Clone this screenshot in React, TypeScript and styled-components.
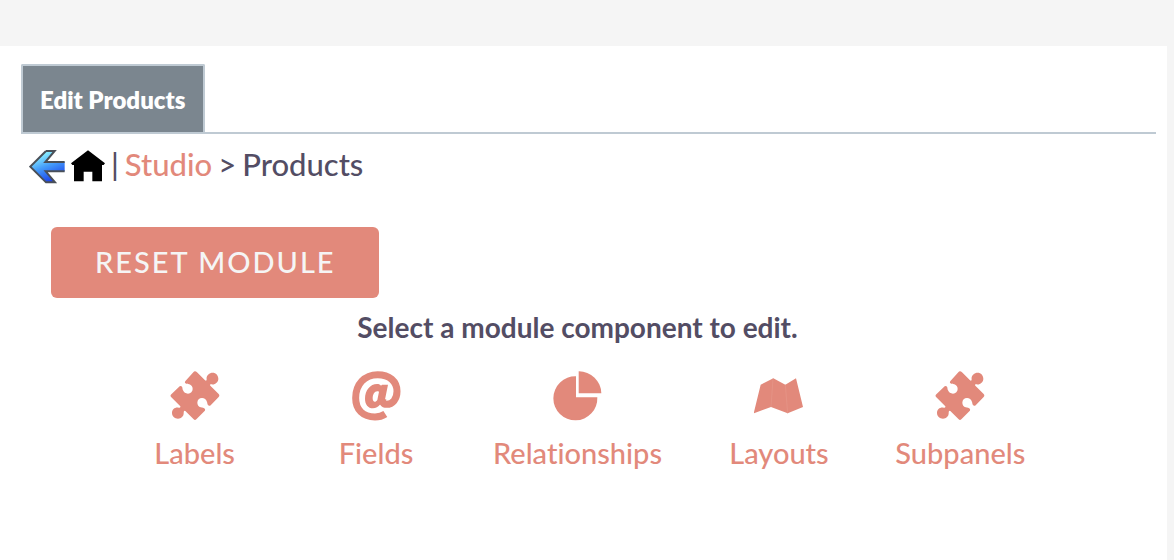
import React from 'react';
import styled, { createGlobalStyle } from 'styled-components';

const coral = '#e2897b';
const ink = '#534d64';
const line = '#bfcad3';

const GlobalStyle = createGlobalStyle`
  * { box-sizing: border-box; }
  html, body, #root { height: 100%; }
  body {
    margin: 0;
    background: #f5f5f5;
    color: ${ink};
    font-family: Lato, "Liberation Sans", sans-serif;
    font-weight: 500;
    font-variant-ligatures: none;
  }
`;

const Page = styled.div`
  display: flex;
  flex-direction: column;
  min-height: 100%;
  padding: 46px 7px 0 0;
`;

const Panel = styled.main`
  flex: 1;
  padding: 18px 11px 40px 21px;
  background: #fff;
`;

const TabBar = styled.nav`
  display: flex;
  border-bottom: 2px solid ${line};
`;

const Tab = styled.button`
  height: 68px;
  padding: 2px 18px 0 17px;
  border: 2px solid ${line};
  border-bottom: 0;
  border-radius: 2px 2px 0 0;
  background: #7b868f;
  color: #fff;
  font: 800 24px/30px Lato, sans-serif;
`;

const Breadcrumb = styled.nav`
  display: flex;
  align-items: center;
  gap: 6px;
  height: 60px;
  padding-left: 8px;
  font-size: 31px;
  line-height: 36px;
  white-space: nowrap;
`;

const CrumbLink = styled.a`
  display: flex;
  color: ${coral};
  text-decoration: none;

  svg {
    margin-top: 6px;
  }
`;

const Actions = styled.div`
  padding: 33px 30px 11px;
`;

const ResetButton = styled.button`
  height: 71px;
  padding: 0 43px 2px 44px;
  border: 0;
  border-radius: 6px;
  background: ${coral};
  color: #f5f5f5;
  font: 500 29px/36px Lato, sans-serif;
  letter-spacing: 2px;
  text-transform: uppercase;
`;

const Chooser = styled.section`
  padding: 0 105px 0 83px;
`;

const Heading = styled.h2`
  margin: 0 0 26px;
  font-size: 28px;
  font-weight: 700;
  line-height: 36px;
  text-align: center;
`;

const ComponentGrid = styled.div`
  display: grid;
  grid-template-columns: 9fr 9fr 11fr 9fr 9fr;
`;

const ComponentLink = styled.a`
  display: flex;
  flex-direction: column;
  align-items: center;
  gap: 14px;
  color: ${coral};
  font-size: 29px;
  line-height: 36px;
  text-decoration: none;
`;

const Icon = styled.svg`
  display: block;
  width: 50px;
  height: 50px;
`;

const BackIcon = () => (
  <svg width="36" height="34" viewBox="0 0 108 102" aria-hidden="true">
    <defs>
      <linearGradient id="back" x1="0.2" y1="0" x2="0.65" y2="1">
        <stop offset="0.1" stopColor="#8ff6ff" />
        <stop offset="0.5" stopColor="#459dfa" />
        <stop offset="1" stopColor="#1638e8" />
      </linearGradient>
    </defs>
    <path d="M4 50 L51 3 H77 L49 36 H107 V64 H50 L78 97 H51 Z" fill="url(#back)" />
    <path d="M51 3 H77 L49 36 H107 M107 64 H50 L78 97 H51 L4 50 L51 3" fill="none" stroke="#4a5058" strokeWidth="6" />
  </svg>
);

const HomeIcon = () => (
  <svg width="34" height="34" viewBox="0 0 102 102" aria-hidden="true">
    <path d="M51 1 L102 40 L98 45 H93 V94 H64 V65 H38 V94 H9 V45 H4 L0 40 Z" fill="#000" />
  </svg>
);

const PuzzleIcon = () => (
  <Icon viewBox="29 26 150 150" fill="currentColor" aria-hidden="true">
    <path d="M104 27 Q107 27 110 30 L134 54 Q139 57 139 51 C137 40 146 31 157 31 C167 31 174 39 174 49 C174 60 164 68 153 66 Q147 65 150 70 L175 95 Q179 100 175 104 L151 129 Q147 132 144 129 C141 127 141 122 140 119 C138 111 132 107 125 107 C117 107 111 113 111 121 C111 128 115 133 121 135 C126 136 131 136 134 140 Q135 144 132 147 L108 171 Q104 175 100 171 L75 146 Q70 144 70 151 C71 161 63 169 53 169 C43 169 35 162 35 152 C35 141 44 134 55 136 Q61 137 60 132 L33 105 Q28 100 33 96 L58 72 Q62 69 65 73 C67 76 66 80 68 84 C70 90 76 94 83 94 C91 94 97 88 97 80 C97 73 93 68 87 66 C82 65 78 65 74 62 Q73 58 76 55 L99 30 Q101 27 104 27 Z" />
  </Icon>
);

const AtIcon = () => (
  <Icon viewBox="32 26 150 150" fill="none" stroke="currentColor" aria-hidden="true">
    <path d="M135 155 C126 161 116 164 104 164 C68 164 46 142 46 107 C46 66 73 37 112 37 C147 37 170 57 170 87 C170 110 157 126 139 126 C129 126 125 121 128 109" strokeWidth="21" />
    <path d="M143 67 L132 121 L120 126 C114 134 106 138 98 138 C83 138 74 126 74 109 C74 84 90 65 110 65 C116 65 120 67 122 70 L125 67 Z M116 88 C105 83 97 94 97 108 C97 119 105 122 111 113 Z" fill="currentColor" fillRule="evenodd" stroke="none" />
  </Icon>
);

const PieIcon = () => (
  <Icon viewBox="30 26 150 150" fill="currentColor" aria-hidden="true">
    <path d="M102 42 V105 H166 A66 66 0 1 1 102 42 Z" />
    <path d="M110 27 A67 67 0 0 1 178 93 H110 Z" />
  </Icon>
);

const MapIcon = () => (
  <Icon viewBox="30 26 150 150" fill="currentColor" aria-hidden="true">
    <path d="M50 67 L88 48 L124 67 L156 48 L177 134 L131 153 L81 134 L29 153 Z" />
    <path d="M87 49 L81 134 M124 67 L131 153" fill="none" stroke="#e6978a" strokeWidth="2" />
  </Icon>
);

const components = [
  { label: 'Labels', Glyph: PuzzleIcon },
  { label: 'Fields', Glyph: AtIcon },
  { label: 'Relationships', Glyph: PieIcon },
  { label: 'Layouts', Glyph: MapIcon },
  { label: 'Subpanels', Glyph: PuzzleIcon },
];

export default function App() {
  return (
    <>
      <GlobalStyle />
      <Page>
        <Panel>
          <TabBar aria-label="Editor tabs">
            <Tab type="button">Edit Products</Tab>
          </TabBar>
          <Breadcrumb aria-label="Breadcrumb">
            <CrumbLink href="#back" aria-label="Back"><BackIcon /></CrumbLink>
            <CrumbLink href="#home" aria-label="Home"><HomeIcon /></CrumbLink>
            <span>|</span>
            <CrumbLink href="#studio">Studio</CrumbLink>
            <span>&gt;</span>
            <span>Products</span>
          </Breadcrumb>
          <Actions>
            <ResetButton type="button">Reset Module</ResetButton>
          </Actions>
          <Chooser>
            <Heading>Select a module component to edit.</Heading>
            <ComponentGrid>
              {components.map(({ label, Glyph }) => (
                <ComponentLink key={label} href={`#${label.toLowerCase()}`}>
                  <Glyph />
                  {label}
                </ComponentLink>
              ))}
            </ComponentGrid>
          </Chooser>
        </Panel>
      </Page>
    </>
  );
}
